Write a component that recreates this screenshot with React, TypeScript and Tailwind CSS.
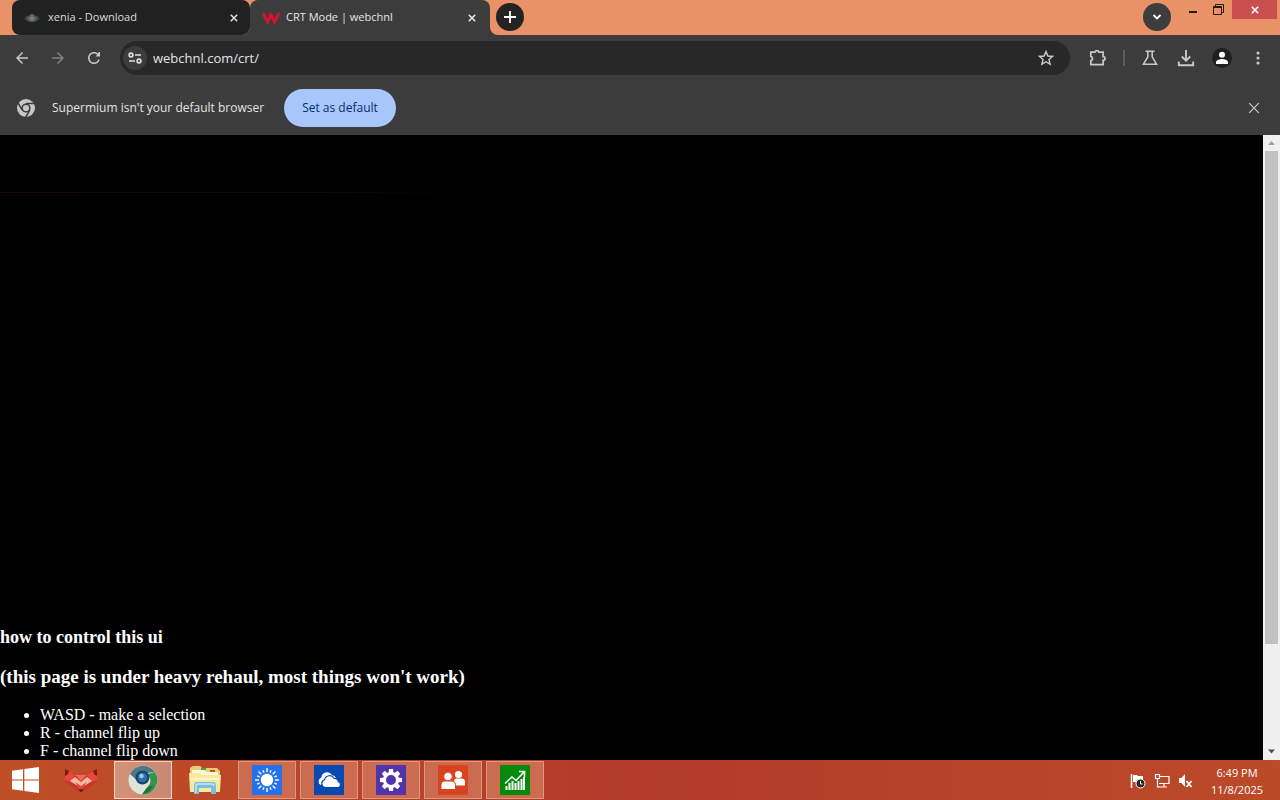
import type { ReactNode } from "react";

const controls = ["WASD - make a selection", "R - channel flip up", "F - channel flip down"];

function CloseIcon({ className = "size-2", width = 2 }: { className?: string; width?: number }) {
  return (
    <svg viewBox="0 0 10 10" className={className} fill="none" stroke="currentColor" strokeWidth={width}>
      <path d="M1 1l8 8M9 1L1 9" />
    </svg>
  );
}

function IconButton({ label, className = "", children }: { label: string; className?: string; children: ReactNode }) {
  return (
    <button aria-label={label} className={`flex size-7 shrink-0 items-center justify-center rounded-full text-[#c9c9c9] ${className}`}>
      {children}
    </button>
  );
}

function TabStrip() {
  return (
    <header className="flex h-[35px] shrink-0 items-start bg-[#e99268] pl-3">
      <div className="flex h-[35px] w-[238px] items-center rounded-lg bg-[#202120] pr-3 pl-3 text-[#dcdcdc]">
        <svg viewBox="0 0 16 16" className="size-4">
          <ellipse cx="8" cy="8.500" rx="7.500" ry="3.500" fill="#3d4645" />
          <path d="M3 9l3-4 2-1.500L10 5l3 4-3 2.500H6z" fill="#5b6665" />
          <circle cx="8" cy="8.500" r="1.800" fill="#7b8584" />
        </svg>
        <span className="ml-2 flex-1 truncate text-[11px]">xenia - Download</span>
        <button aria-label="Close tab">
          <CloseIcon />
        </button>
      </div>
      <div className="relative flex h-[35px] w-[240px] items-center rounded-t-lg bg-[#3c3c3c] pr-3.5 pl-3 text-[#e6e6e6]">
        <svg viewBox="0 0 8 8" className="absolute right-full bottom-0 size-2" fill="#3c3c3c">
          <path d="M8 0a8 8 0 0 1-8 8h8z" />
        </svg>
        <svg viewBox="0 0 18 14" className="h-3.5 w-[18px]" fill="none" stroke="#d5142e" strokeWidth="3">
          <path d="M1 2l4.500 9L9 4l3.500 7L17 2" />
          <path d="M7 3l2 4 2-4" strokeWidth="1.500" />
        </svg>
        <span className="ml-1.5 flex-1 truncate text-[11px]">CRT Mode | webchnl</span>
        <button aria-label="Close tab">
          <CloseIcon />
        </button>
        <svg viewBox="0 0 8 8" className="absolute bottom-0 left-full size-2" fill="#3c3c3c">
          <path d="M0 0a8 8 0 0 0 8 8H0z" />
        </svg>
      </div>
      <button aria-label="New tab" className="mt-[3px] ml-1.5 flex size-7 items-center justify-center rounded-full bg-[#242322] text-white">
        <svg viewBox="0 0 12 12" className="size-3" stroke="currentColor" strokeWidth="1.800">
          <path d="M6 0v12M0 6h12" />
        </svg>
      </button>
      <div className="ml-auto flex items-start">
        <button aria-label="Search tabs" className="mt-[3px] flex size-7 items-center justify-center rounded-full bg-[#3d3d3e] text-white">
          <svg viewBox="0 0 10 6" className="h-1.5 w-2.5" fill="none" stroke="currentColor" strokeWidth="1.800">
            <path d="M1.500 1L5 4.500 8.500 1" />
          </svg>
        </button>
        <button aria-label="Minimize" className="ml-1.5 flex h-5 w-7 items-center justify-center pt-1 pl-1">
          <svg viewBox="0 0 8 2" className="h-0.5 w-2">
            <path d="M0 0h8v2H0z" fill="#2b1710" />
          </svg>
        </button>
        <button aria-label="Restore" className="flex h-[19px] w-[26px] items-center justify-center">
          <svg viewBox="0 0 11 11" className="size-[11px]" fill="none" stroke="#2b1710">
            <path d="M2.500 2.500v-2h8v8h-2M.5 2.500h8v8h-8zM.5 3.500h8" />
          </svg>
        </button>
        <button aria-label="Close" className="mr-[3px] ml-px flex h-[19px] w-[45px] items-center justify-center bg-[#c9504f] text-white">
          <CloseIcon />
        </button>
      </div>
    </header>
  );
}

function Toolbar() {
  return (
    <div className="flex h-[46px] shrink-0 items-center gap-2 bg-[#3c3c3c] px-2">
      <IconButton label="Back">
        <svg viewBox="0 0 24 24" className="size-[18px]" fill="currentColor">
          <path d="M20 11H7.830l5.590-5.590L12 4l-8 8 8 8 1.410-1.410L7.830 13H20v-2z" />
        </svg>
      </IconButton>
      <IconButton label="Forward">
        <svg viewBox="0 0 24 24" className="size-[18px]" fill="#808080">
          <path d="M4 11h12.170l-5.590-5.590L12 4l8 8-8 8-1.410-1.410L16.170 13H4v-2z" />
        </svg>
      </IconButton>
      <IconButton label="Reload">
        <svg viewBox="0 0 24 24" className="size-[18px]" fill="currentColor">
          <path d="M17.650 6.350C16.200 4.900 14.210 4 12 4c-4.420 0-7.990 3.580-7.990 8s3.570 8 7.990 8c3.730 0 6.840-2.550 7.730-6h-2.080c-.82 2.330-3.040 4-5.650 4-3.310 0-6-2.690-6-6s2.690-6 6-6c1.660 0 3.140.69 4.220 1.780L14 10h6V4h-2z" />
        </svg>
      </IconButton>
      <div className="ml-1 flex h-[34px] min-w-0 flex-1 items-center rounded-full bg-[#282828] pr-2.5 pl-[3px]">
        <button aria-label="Site information" className="flex size-6 shrink-0 items-center justify-center rounded-full bg-[#3c3c3c] text-[#e0e0e0]">
          <svg viewBox="0 0 14 12" className="h-3 w-3.5" fill="none" stroke="currentColor" strokeWidth="1.600">
            <circle cx="3" cy="3" r="1.900" />
            <path d="M7 3h6M1 9h6" />
            <circle cx="11" cy="9" r="1.900" />
          </svg>
        </button>
        <input
          aria-label="Address"
          defaultValue="webchnl.com/crt/"
          className="ml-1.5 h-7 min-w-0 flex-1 bg-transparent text-[13px] leading-6 text-[#e4e4e4] outline-none"
        />
        <IconButton label="Bookmark this tab">
          <svg viewBox="0 0 24 24" className="size-[18px]" fill="none" stroke="currentColor" strokeWidth="1.900">
            <path d="M12 3.500l2.500 5.900 6.300.5-4.800 4.200 1.500 6.200-5.500-3.300-5.500 3.300L8 14.100 3.200 9.900l6.300-.5z" />
          </svg>
        </IconButton>
      </div>
      <div className="ml-1.5 flex items-center gap-2">
        <IconButton label="Extensions">
          <svg viewBox="0 0 18 18" className="size-[18px]" fill="none" stroke="currentColor" strokeWidth="1.700">
            <path d="M1.800 3.200H6a2 2 0 0 1 3.900 0h4.200v4.400a1.900 1.900 0 0 1 0 3.800v4.300H1.800v-4.100a2.200 2.200 0 0 0 0-4.300z" />
          </svg>
        </IconButton>
        <div className="mx-[3px] h-4 w-0.5 bg-[#5b5b5b]" />
        <IconButton label="Experiments">
          <svg viewBox="0 0 16 16" className="size-4" fill="none" stroke="currentColor" strokeWidth="1.600">
            <path d="M3.500 1.300h9M5.800 1.500v5.300L1.500 14.200h13l-4.300-7.400V1.500" />
          </svg>
        </IconButton>
        <IconButton label="Downloads">
          <svg viewBox="0 0 18 18" className="size-[18px]" fill="none" stroke="currentColor" strokeWidth="1.900">
            <path d="M9 1v10.500M4.800 7.500L9 11.700l4.200-4.200M1.800 12.500v3.700h14.400v-3.700" />
          </svg>
        </IconButton>
        <IconButton label="Profile">
          <svg viewBox="0 0 20 20" className="size-5">
            <circle cx="10" cy="10" r="10" fill="#1f1f1f" />
            <circle cx="10" cy="6.800" r="3" fill="#fff" />
            <path d="M4 16v-1.800c0-2 4-3.100 6-3.100s6 1.100 6 3.100V16z" fill="#fff" />
          </svg>
        </IconButton>
        <IconButton label="Menu">
          <svg viewBox="0 0 4 14" className="h-3.5 w-1" fill="currentColor">
            <circle cx="2" cy="2" r="1.600" />
            <circle cx="2" cy="7" r="1.600" />
            <circle cx="2" cy="12" r="1.600" />
          </svg>
        </IconButton>
      </div>
    </div>
  );
}

function InfoBar() {
  return (
    <div className="flex h-[54px] shrink-0 items-center bg-[#3c3c3c] pr-4 pb-px pl-4 text-[#e3e3e3]">
      <svg viewBox="0 0 20 20" className="size-5">
        <circle cx="10" cy="10" r="9" fill="#c7c7c7" />
        <circle cx="10" cy="10" r="4.600" fill="#3c3c3c" />
        <path d="M10 5.600h8.500M6.200 12.200L2 5M13.800 12.200L9.500 19.500" stroke="#3c3c3c" strokeWidth="1.500" />
        <circle cx="10" cy="10" r="3.100" fill="#c7c7c7" />
      </svg>
      <span className="ml-4 min-w-[216px] text-xs">Supermium isn't your default browser</span>
      <button className="ml-4 h-[38px] w-28 rounded-full bg-[#a8c7fa] text-xs font-medium text-[#062e6f]">Set as default</button>
      <button aria-label="Dismiss" className="ml-auto flex size-5 items-center justify-center text-[#c9c9c9]">
        <CloseIcon className="size-3" width={1} />
      </button>
    </div>
  );
}

function Scrollbar() {
  return (
    <div className="flex w-[17px] shrink-0 flex-col items-center bg-[#f0f0f0]">
      <svg viewBox="0 0 17 16" className="h-4 w-[17px] shrink-0">
        <path d="M5 10l3.500-4 3.500 4z" fill="#a3a3a3" />
      </svg>
      <div className="flex min-h-0 w-[13px] flex-1 flex-col">
        <div className="h-5/6 bg-[#c1c1c1]" />
      </div>
      <svg viewBox="0 0 17 17" className="size-[17px] shrink-0">
        <path d="M5 6.500l3.500 4 3.500-4z" fill="#505050" />
      </svg>
    </div>
  );
}

function PageView() {
  return (
    <main className="flex min-h-0 flex-1 bg-black">
      <div className="min-w-0 flex-1 overflow-hidden font-['Liberation_Serif',serif] text-white">
        <div className="flex h-[480px] flex-col pt-[57px]">
          <div className="h-px w-1/2 bg-linear-to-r from-[#180606] via-[#0b0b12] to-black" />
        </div>
        <h2 className="mt-3 text-lg leading-5 font-bold">how to control this ui</h2>
        <h3 className="mt-5 text-[19px] leading-5 font-bold">(this page is under heavy rehaul, most things won't work)</h3>
        <ul className="mt-[19px] list-disc pl-10 text-base leading-[18px]">
          {controls.map((c) => (
            <li key={c}>{c}</li>
          ))}
        </ul>
      </div>
      <Scrollbar />
    </main>
  );
}

function FoxIcon() {
  return (
    <svg viewBox="0 0 34 28" className="h-7 w-[34px]">
      <path d="M1 3l10 6h12l10-6v13l-16 11L1 16z" fill="#c9352c" />
      <path d="M1 3l10 6-4 7-6-2zM33 3l-10 6 4 7 6-2z" fill="#e8473d" />
      <path d="M1 3l4 2-1 3-3 2zM33 3l-4 2 1 3 3 2z" fill="#7d1a1c" />
      <path d="M11 9h12l-6 6z" fill="#ef6a58" />
      <path d="M6 15l5-4 6 5 6-5 5 4-11 7z" fill="#f7b9a0" />
      <path d="M11 16l6 4 6-4-6 9z" fill="#dd4a3b" />
      <path d="M14.500 23.500h5L17 26z" fill="#4c1012" />
    </svg>
  );
}

function SupermiumIcon() {
  return (
    <svg viewBox="0 0 30 30" className="size-[30px]">
      <circle cx="15" cy="15" r="14.500" fill="#dfe4da" />
      <path d="M2 9A14.500 14.500 0 0 1 27 7L15 8.500a7 7 0 0 0-7 6z" fill="#4d7888" />
      <path d="M27 7a14.500 14.500 0 0 1-13 22.400l7-9.400c2-3 2-7-1-11z" fill="#36934a" />
      <path d="M25 20a14 14 0 0 1-11 9.400l5-6.600z" fill="#207137" />
      <circle cx="14.500" cy="12.500" r="7" fill="#1c4269" />
      <circle cx="14.500" cy="12.500" r="4.800" fill="#2d6fae" />
      <circle cx="13.500" cy="11" r="2.200" fill="#9ccbea" />
    </svg>
  );
}

function ExplorerIcon() {
  return (
    <svg viewBox="0 0 34 30" className="h-[30px] w-[34px]">
      <path d="M2 3l3-2h7l2 2h15l3 3v20H2z" fill="#e6cf78" />
      <path d="M4 5h12l2 2h12v4H4z" fill="#fff8d0" />
      <path d="M13 3h5v2h-5z" fill="#4d9c45" />
      <path d="M22 5h5v2h-5z" fill="#d24a30" />
      <path d="M1 8h11l2 2h19l-1 17H2z" fill="#f6e9a0" />
      <path d="M2 13h30v2H2z" fill="#fbf4c8" />
      <path d="M6 29V20q0-3 3-3h16q3 0 3 3v9h-5v-6H11v6z" fill="#7dbde2" />
      <path d="M8 28v-7q0-2 2-2h14q2 0 2 2" fill="none" stroke="#c8e8f7" strokeWidth="1.500" />
    </svg>
  );
}

function Tile({ color, children }: { color: string; children: ReactNode }) {
  return (
    <span className={`flex size-[30px] items-center justify-center ${color}`}>
      <svg viewBox="0 0 30 30" className="size-[30px]">
        {children}
      </svg>
    </span>
  );
}

const rays = Array.from({ length: 16 }, (_, i) => i * 22.5);
const teeth = Array.from({ length: 8 }, (_, i) => i * 45);

const apps = [
  {
    name: "Weather",
    icon: (
      <Tile color="bg-[#2672ec]">
        <circle cx="15" cy="15" r="6.200" fill="#fff" />
        {rays.map((a, i) => (
          <path key={a} d={i % 2 ? "M15 4.500v2.500" : "M15 3v4"} stroke="#fff" strokeWidth="1.400" transform={`rotate(${a} 15 15)`} />
        ))}
      </Tile>
    ),
  },
  {
    name: "OneDrive",
    icon: (
      <Tile color="bg-[#094ab2]">
        <path d="M7 20a3.800 3.800 0 0 1 .3-7.200A5.800 5.800 0 0 1 18 10a5 5 0 0 1 4 3" fill="#fff" />
        <path d="M11 22.500a4 4 0 0 1-.5-7.700 5.200 5.200 0 0 1 9.600-1.500 4.200 4.200 0 0 1 4.300 3.500 3 3 0 0 1 0 5.700z" fill="#fff" stroke="#094ab2" strokeWidth="1.200" />
      </Tile>
    ),
  },
  {
    name: "Settings",
    icon: (
      <Tile color="bg-[#5133ab]">
        {teeth.map((a) => (
          <path key={a} d="M12.500 8.500l.5-4.500h4l.5 4.500z" fill="#fff" transform={`rotate(${a} 15 15)`} />
        ))}
        <circle cx="15" cy="15" r="6.500" fill="none" stroke="#fff" strokeWidth="3" />
      </Tile>
    ),
  },
  {
    name: "People",
    icon: (
      <Tile color="bg-[#d9431f]">
        <circle cx="20.500" cy="9.500" r="3.600" fill="#fff" />
        <path d="M16 20.500v-4q0-3 2.500-3h5q3.500 0 3.500 3v4z" fill="#fff" />
        <circle cx="10" cy="11.500" r="4.300" fill="#fff" stroke="#d9431f" />
        <path d="M3 24.500v-4.700Q3 16 6 16h8q3.500 0 3.500 3.800v4.700z" fill="#fff" stroke="#d9431f" />
      </Tile>
    ),
  },
  {
    name: "Finance",
    icon: (
      <Tile color="bg-[#078a0b]">
        <path d="M6.500 25v-4M9.500 25v-7M12.500 25v-9M15.500 25v-7M18.500 25v-9M21.500 25V14M24 25V12" stroke="#fff" strokeWidth="2" />
        <path d="M5 18.500l7-6.500 4 3.500 7.500-8M19 6.500h5.500V12" fill="none" stroke="#fff" strokeWidth="1.600" />
      </Tile>
    ),
  },
];

function Taskbar() {
  return (
    <footer className="flex h-10 shrink-0 items-center bg-linear-to-r from-[#bf4f27] via-[#b23b2a] via-50% to-[#bb4a28]">
      <button aria-label="Start" className="flex h-10 w-[50px] items-center justify-center">
        <svg viewBox="0 0 27 26" className="h-[26px] w-[27px]" fill="#fff">
          <path d="M0 3.800l11-1.600v10.300H0zM12.300 2L27 0v12.500H12.300zM0 13.600h11v10.200L0 22.300zM12.300 13.600H27V26l-14.700-2z" />
        </svg>
      </button>
      <nav className="ml-0.5 flex gap-1">
        <button aria-label="RedFox" className="flex h-[38px] w-[58px] items-center justify-center">
          <FoxIcon />
        </button>
        <button aria-label="Supermium" className="flex h-[38px] w-[58px] items-center justify-center border border-[#f6d9cb] bg-linear-to-r from-[#d29478] to-[#c98772]">
          <SupermiumIcon />
        </button>
        <button aria-label="File Explorer" className="flex h-[38px] w-[58px] items-center justify-center">
          <ExplorerIcon />
        </button>
        {apps.map((app) => (
          <button key={app.name} aria-label={app.name} className="flex h-[38px] w-[58px] items-center justify-center border border-[#de9880] bg-[#cb6b50]">
            {app.icon}
          </button>
        ))}
      </nav>
      <div className="ml-auto flex items-center gap-2 pt-0.5 text-white">
        <svg viewBox="0 0 16 16" className="size-4">
          <path d="M1.500 1v14" stroke="#fff" strokeWidth="1.500" />
          <path d="M3 2h4l1 1h5v6H3z" fill="#fff" />
          <circle cx="10.500" cy="10.500" r="4.500" fill="#2e2523" stroke="#fff" />
          <path d="M10.500 8v3h2" fill="none" stroke="#fff" />
        </svg>
        <svg viewBox="0 0 16 16" className="size-4" fill="none" stroke="#fff" strokeWidth="1.200">
          <path d="M6 3.500h9v7H5M10 10.500V14M7 14h6" />
          <path d="M1.500 1.500h4v4h-4zM3.500 5.500V14H7" />
        </svg>
        <svg viewBox="0 0 16 16" className="size-4">
          <path d="M1 5h2.500L7 1v13l-3.500-4H1z" fill="#fff" />
          <path d="M8.500 8l5 6M13.500 8l-5 6" stroke="#fff" strokeWidth="1.800" />
        </svg>
      </div>
      <time className="mr-3 ml-3 w-[62px] pt-0.5 text-center text-[11px] leading-[17px] text-white">
        <span className="block">6:49 PM</span>
        <span className="block">11/8/2025</span>
      </time>
    </footer>
  );
}

export default function App() {
  return (
    <div className="flex h-screen flex-col overflow-hidden bg-black font-['Open_Sans','Noto_Sans',sans-serif]">
      <TabStrip />
      <Toolbar />
      <InfoBar />
      <PageView />
      <Taskbar />
    </div>
  );
}
